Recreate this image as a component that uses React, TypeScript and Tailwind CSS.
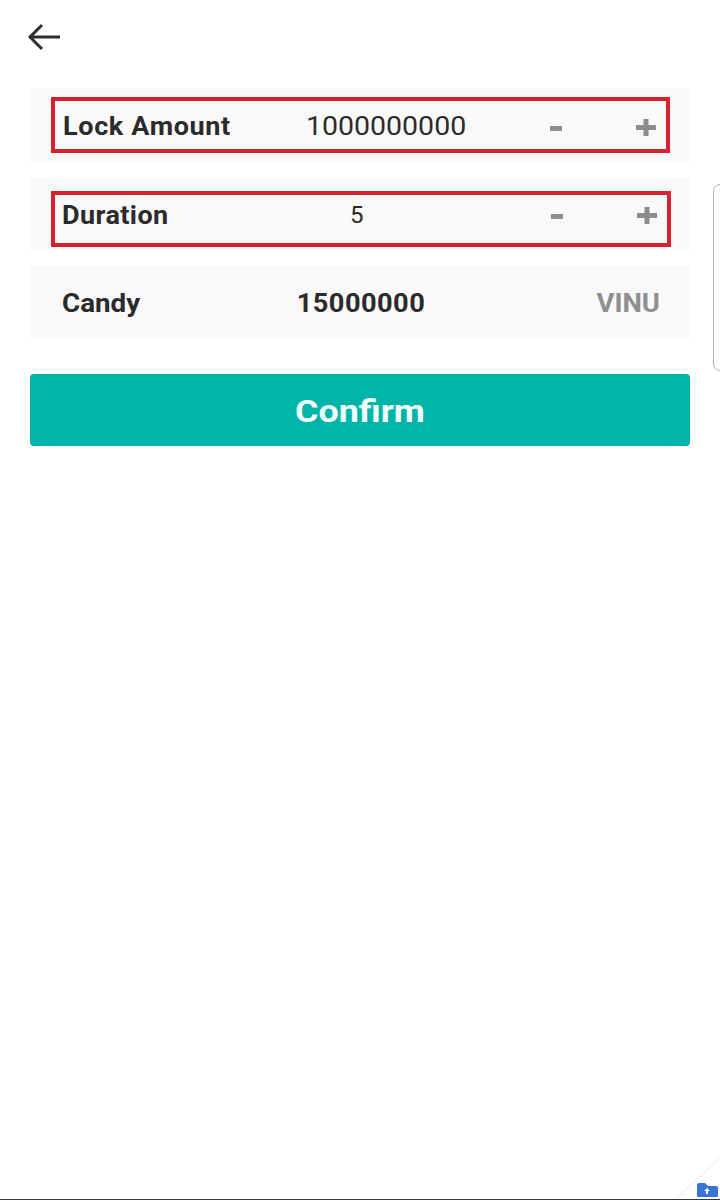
const font = "font-['Roboto',sans-serif]";

function Stepper({ minusTop, plusTop }: { minusTop: string; plusTop: string }) {
    return (
        <>
            <span className={`h-[5px] w-[12px] shrink-0 bg-[#8f8f8f] ${minusTop}`} />
            <svg className={`ml-auto mr-[10px] shrink-0 ${plusTop}`} width="20" height="17" viewBox="0 0 20 17">
                <path d="M10 0v17M0 8.5h20" stroke="#8c8c8c" strokeWidth="5" fill="none" />
            </svg>
        </>
    );
}

export default function App() {
    return (
        <div className={`relative h-[1200px] w-[720px] overflow-hidden bg-white ${font} text-[#2b2b2b]`}>
            <div className="px-[30px] pt-[22px]">
                <svg className="-ml-[3px] block" width="34" height="30" viewBox="0 0 34 30">
                    <path d="M33 15H3M15 3L3 15l12 12" stroke="#2e2e2e" strokeWidth="3" fill="none" />
                </svg>

                <div className="mt-[36px] flex flex-col">
                    <div className="h-[74px] rounded-[2px] bg-[#f9f9f9] px-[21px] pt-[9px]">
                        <div className="flex h-[56px] w-[619px] items-start border-[4px] border-[#d8222f]">
                            <span className="mt-[11px] ml-[8px] w-[243px] origin-left scale-x-[1.08] text-[25px] leading-[30px] font-bold tracking-[0.6px] whitespace-nowrap">Lock Amount</span>
                            <span className="mt-[11px] w-[244px] origin-left scale-x-[1.14] text-[25px] leading-[30px] whitespace-nowrap">1000000000</span>
                            <Stepper minusTop="mt-[25px]" plusTop="mt-[18px]" />
                        </div>
                    </div>

                    <div className="mt-[16px] h-[72px] rounded-[2px] bg-[#f9f9f9] px-[21px] pt-[13px]">
                        <div className="flex h-[56px] w-[620px] items-start border-[4px] border-[#d8222f]">
                            <span className="mt-[6px] ml-[7px] w-[288px] origin-left scale-x-[1.08] text-[25px] leading-[30px] font-bold tracking-[0.4px] whitespace-nowrap">Duration</span>
                            <span className="mt-[5px] w-[201px] text-[24px] leading-[30px] whitespace-nowrap">5</span>
                            <Stepper minusTop="mt-[19px]" plusTop="mt-[12px]" />
                        </div>
                    </div>

                    <div className="mt-[16px] flex h-[72px] items-center justify-between rounded-[2px] bg-[#f9f9f9] pt-[4px] pl-[32px] pr-[30px]">
                        <span className="w-[200px] origin-left scale-x-[1.11] text-[25px] font-bold">Candy</span>
                        <span className="scale-x-[1.09] text-[25px] font-bold tracking-[0.4px]">15000000</span>
                        <span className="w-[200px] origin-right scale-x-[1.1] text-right text-[25px] font-bold text-[#8f8f8f]">VINU</span>
                    </div>

                    <button className="mt-[36px] h-[72px] rounded-[4px] bg-[#00b5a8] pt-[2px] text-[32px] font-bold text-[#effffd]">
                        <span className="inline-block scale-x-[1.12]">Confirm</span>
                    </button>
                </div>
            </div>

            {/* floating side tab at the right edge */}
            <div className="absolute left-[713px] top-[184px] h-[187px] w-[20px] rounded-[7px] border-[1px] border-[#b5b5b5] bg-white" />

            {/* corner mark and bottom edge */}
            <svg className="absolute bottom-0 right-0" width="60" height="50" viewBox="0 0 60 50">
                <path d="M16 49L60 8" stroke="#e8e8e8" strokeWidth="1" fill="none" />
                <path d="M37 35a2 2 0 0 1 2-2h6l3 3h8a2 2 0 0 1 2 2v8a1 1 0 0 1-1 1H38a1 1 0 0 1-1-1z" fill="#3a73d6" />
                <path d="M47 38l3 3h-2v3h-2v-3h-2z" fill="#ffffff" />
            </svg>
            <div className="absolute bottom-0 left-0 h-[1px] w-full bg-[#3a3a3a]" />
        </div>
    );
}
